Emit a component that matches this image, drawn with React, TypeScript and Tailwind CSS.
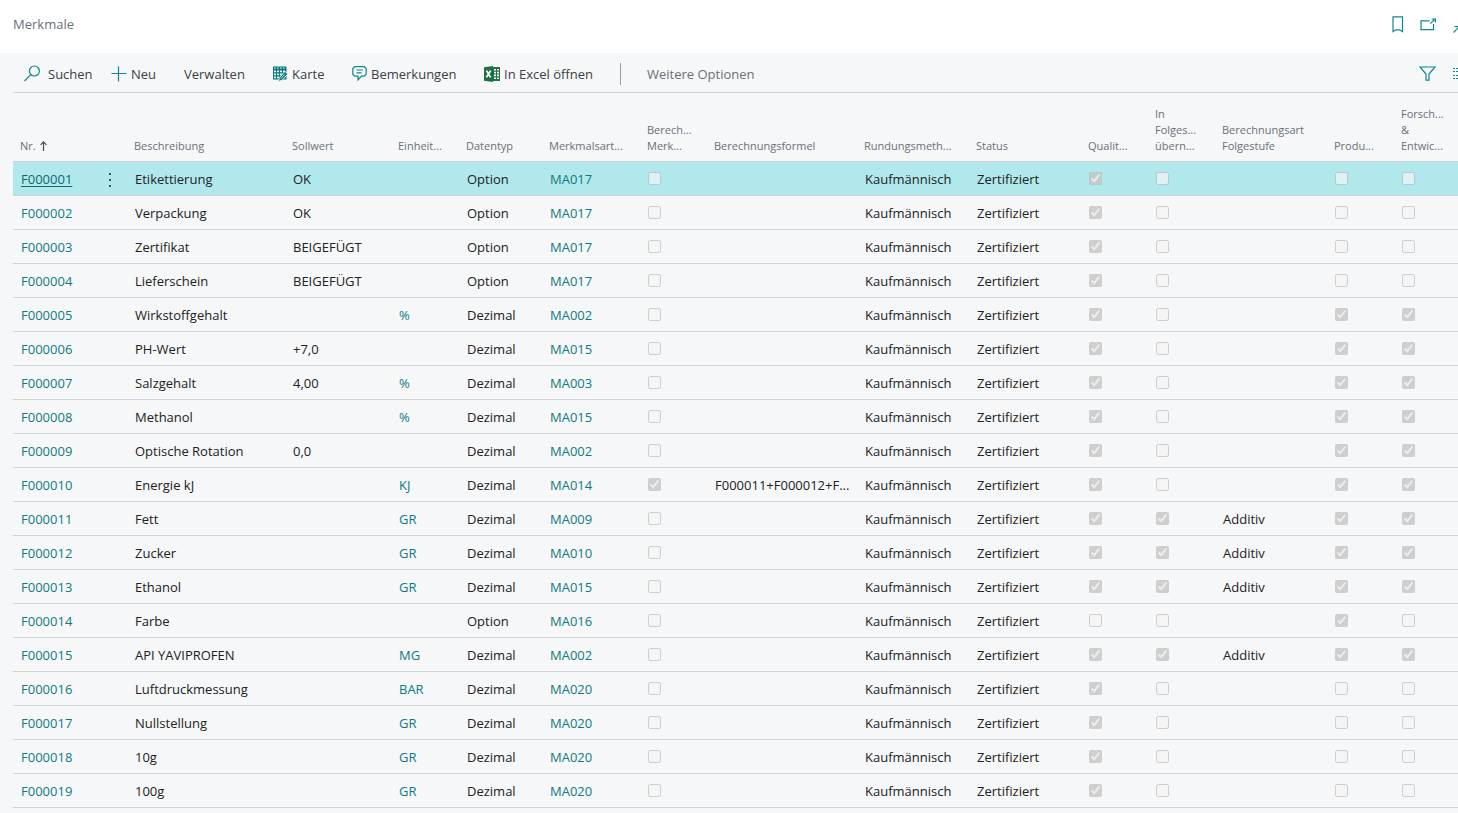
import React from "react";

type Row = {
  nr: string;
  name: string;
  target?: string;
  unit?: string;
  type: string;
  kind: string;
  calculated?: boolean;
  formula?: string;
  quality: boolean;
  carry?: boolean;
  nextLevel?: string;
  production?: boolean;
  research?: boolean;
};

const rows: Row[] = [
  { nr: "F000001", name: "Etikettierung", target: "OK", type: "Option", kind: "MA017", quality: true },
  { nr: "F000002", name: "Verpackung", target: "OK", type: "Option", kind: "MA017", quality: true },
  { nr: "F000003", name: "Zertifikat", target: "BEIGEFÜGT", type: "Option", kind: "MA017", quality: true },
  { nr: "F000004", name: "Lieferschein", target: "BEIGEFÜGT", type: "Option", kind: "MA017", quality: true },
  { nr: "F000005", name: "Wirkstoffgehalt", unit: "%", type: "Dezimal", kind: "MA002", quality: true, production: true, research: true },
  { nr: "F000006", name: "PH-Wert", target: "+7,0", type: "Dezimal", kind: "MA015", quality: true, production: true, research: true },
  { nr: "F000007", name: "Salzgehalt", target: "4,00", unit: "%", type: "Dezimal", kind: "MA003", quality: true, production: true, research: true },
  { nr: "F000008", name: "Methanol", unit: "%", type: "Dezimal", kind: "MA015", quality: true, production: true, research: true },
  { nr: "F000009", name: "Optische Rotation", target: "0,0", type: "Dezimal", kind: "MA002", quality: true, production: true, research: true },
  { nr: "F000010", name: "Energie kJ", unit: "KJ", type: "Dezimal", kind: "MA014", calculated: true, formula: "F000011+F000012+F...", quality: true, production: true, research: true },
  { nr: "F000011", name: "Fett", unit: "GR", type: "Dezimal", kind: "MA009", quality: true, carry: true, nextLevel: "Additiv", production: true, research: true },
  { nr: "F000012", name: "Zucker", unit: "GR", type: "Dezimal", kind: "MA010", quality: true, carry: true, nextLevel: "Additiv", production: true, research: true },
  { nr: "F000013", name: "Ethanol", unit: "GR", type: "Dezimal", kind: "MA015", quality: true, carry: true, nextLevel: "Additiv", production: true, research: true },
  { nr: "F000014", name: "Farbe", type: "Option", kind: "MA016", quality: false, production: true },
  { nr: "F000015", name: "API YAVIPROFEN", unit: "MG", type: "Dezimal", kind: "MA002", quality: true, carry: true, nextLevel: "Additiv", production: true, research: true },
  { nr: "F000016", name: "Luftdruckmessung", unit: "BAR", type: "Dezimal", kind: "MA020", quality: true },
  { nr: "F000017", name: "Nullstellung", unit: "GR", type: "Dezimal", kind: "MA020", quality: true },
  { nr: "F000018", name: "10g", unit: "GR", type: "Dezimal", kind: "MA020", quality: true },
  { nr: "F000019", name: "100g", unit: "GR", type: "Dezimal", kind: "MA020", quality: true },
];

const columns: { id: string; lines: string[]; width: string }[] = [
  { id: "nr", lines: ["Nr."], width: "w-[114px]" },
  { id: "name", lines: ["Beschreibung"], width: "w-[158px]" },
  { id: "target", lines: ["Sollwert"], width: "w-[106px]" },
  { id: "unit", lines: ["Einheit..."], width: "w-[68px]" },
  { id: "type", lines: ["Datentyp"], width: "w-[83px]" },
  { id: "kind", lines: ["Merkmalsart..."], width: "w-[98px]" },
  { id: "calculated", lines: ["Berech...", "Merk..."], width: "w-[67px]" },
  { id: "formula", lines: ["Berechnungsformel"], width: "w-[150px]" },
  { id: "rounding", lines: ["Rundungsmeth..."], width: "w-[112px]" },
  { id: "status", lines: ["Status"], width: "w-[112px]" },
  { id: "quality", lines: ["Qualit..."], width: "w-[67px]" },
  { id: "carry", lines: ["In", "Folges...", "übern..."], width: "w-[67px]" },
  { id: "nextLevel", lines: ["Berechnungsart", "Folgestufe"], width: "w-[112px]" },
  { id: "production", lines: ["Produ..."], width: "w-[67px]" },
  { id: "research", lines: ["Forsch...", "&", "Entwic..."], width: "w-auto" },
];

const teal = "#12868a";

function SearchIcon() {
  return (
    <svg width="17" height="17" viewBox="0 0 17 17" fill="none" stroke={teal} strokeWidth="1.2" aria-hidden="true">
      <circle cx="10.4" cy="6" r="5" />
      <path d="M6.8 9.6 0.5 16" />
    </svg>
  );
}

function PlusIcon() {
  return (
    <svg width="16" height="16" viewBox="0 0 16 16" stroke={teal} strokeWidth="1.2" aria-hidden="true">
      <path d="M7.5 0.5v15M0.5 7.5h15" />
    </svg>
  );
}

function CardIcon() {
  return (
    <svg width="16" height="16" viewBox="0 0 16 16" aria-hidden="true">
      <path d="M1 0.5h13.5v13H1z" fill="#08787c" />
      <path
        d="M2.2 1.5h1.3v1.2H2.2zM5.2 1.5h1.3v1.2H5.2zM8.2 1.5h1.3v1.2H8.2zM11.2 1.5h1.3v1.2h-1.3zM2 4.5h2v1.8H2zM5 4.5h2v1.8H5zM8 4.5h2v1.8H8zM11 4.5h2v1.8h-2zM2 7.5h2v1.8H2zM5 7.5h2v1.8H5zM8 7.5h2v1.8H8zM2 10.5h2v1.8H2zM5 10.5h2v1.8H5z"
        fill="#f5f7f9"
      />
      <path d="M6.3 15.5 7.4 11.5 13 5.4l2.8 2.6-5.6 6.2z" fill="#08787c" stroke="#f5f7f9" strokeWidth="0.9" />
      <path d="M8.8 12.6 12.6 8.4" stroke="#f5f7f9" strokeWidth="0.8" />
    </svg>
  );
}

function CommentIcon() {
  return (
    <svg width="15" height="15" viewBox="0 0 15 15" fill="none" stroke={teal} strokeWidth="1.2" aria-hidden="true">
      <path d="M2.8 0.6h9.4l2 2v5.6l-2 2H9.4L6 13.9V10.2H2.8l-2-2V2.6z" />
      <path d="M4.5 4h6.5M4.5 6.8h5" />
    </svg>
  );
}

function ExcelIcon() {
  return (
    <svg width="16" height="16" viewBox="0 0 16 16" aria-hidden="true">
      <path d="M8 1h8v14H8z" fill="#1f7145" />
      <path
        d="M10 3h2v1.6h-2zM13 3h2v1.6h-2zM10 5.8h2v1.6h-2zM13 5.8h2v1.6h-2zM10 8.6h2v1.6h-2zM13 8.6h2v1.6h-2zM10 11.4h2V13h-2zM13 11.4h2V13h-2z"
        fill="#fff"
      />
      <path d="M0 1.3 9 0v16l-9-1.3z" fill="#1f7145" />
      <path d="M2.4 4.6 6.6 11.4M6.6 4.6 2.4 11.4" stroke="#fff" strokeWidth="1.8" />
    </svg>
  );
}

function BookmarkIcon() {
  return (
    <svg width="12" height="17" viewBox="0 0 12 17" fill="none" stroke={teal} strokeWidth="1.2" aria-hidden="true">
      <path d="M1 0.8h9.5v14.8L7.6 13.8H3.9L1 15.6z" />
    </svg>
  );
}

function PopOutIcon() {
  return (
    <svg width="17" height="13" viewBox="0 0 17 13" fill="none" stroke={teal} strokeWidth="1.2" aria-hidden="true">
      <path d="M9.5 2.8H1v8.8h12.5V6" />
      <path d="M10.4 5.6 15 1M11.8 1H15.4V4.6" />
    </svg>
  );
}

function CollapseIcon() {
  return (
    <svg width="16" height="16" viewBox="0 0 16 16" fill="none" stroke={teal} strokeWidth="1.2" aria-hidden="true">
      <path d="M0.5 15.5 6 10M1.5 9.6H6.4V14.5M15.5 0.5 10 6M9.6 1.5V6.4H14.5" />
    </svg>
  );
}

function FilterIcon() {
  return (
    <svg width="17" height="15" viewBox="0 0 17 15" fill="none" stroke={teal} strokeWidth="1.2" aria-hidden="true">
      <path d="M1 1h15L10 8v6.2H7V8z" />
    </svg>
  );
}

function ListIcon() {
  return (
    <svg width="16" height="13" viewBox="0 0 16 13" stroke={teal} strokeWidth="1.2" aria-hidden="true">
      <path d="M0 1.5h2M3 1.5h13M0 4.5h2M3 4.5h13M0 8.5h2M3 8.5h13M0 11.5h2M3 11.5h13" />
    </svg>
  );
}

function TickCell({ on, label }: { on?: boolean; label: string }) {
  return (
    <td className="p-0 pl-2">
      <input type="checkbox" disabled checked={!!on} readOnly aria-label={label} className="m-0 block size-[13px]" />
    </td>
  );
}

function Cell({ children }: { children?: React.ReactNode }) {
  return <td className="p-0 pt-[3px] pl-2 whitespace-nowrap">{children}</td>;
}

function CodeLink({ children }: { children: React.ReactNode }) {
  return (
    <a href="#" className="text-[#12797d]">
      {children}
    </a>
  );
}

function Action({ label, icon, className }: { label: string; icon?: React.ReactNode; className: string }) {
  return (
    <button type="button" className={`flex items-center whitespace-nowrap ${className}`}>
      {icon}
      <span className="pt-0.5">{label}</span>
    </button>
  );
}

export default function App() {
  return (
    <div
      lang="de"
      className="flex min-h-screen flex-col overflow-hidden bg-[#f5f7f9] font-['Open_Sans',sans-serif] text-[13px] text-[#212121]"
    >
      <header className="flex h-[53px] items-center justify-between bg-white pb-1 pl-[13px]">
        <h1 className="text-[13px] text-[#6b7078]">Merkmale</h1>
        <div className="-mr-[11px] flex items-center gap-4">
          <button type="button" aria-label="Lesezeichen"><BookmarkIcon /></button>
          <button type="button" aria-label="In neuem Fenster öffnen"><PopOutIcon /></button>
          <button type="button" aria-label="Verkleinern"><CollapseIcon /></button>
        </div>
      </header>

      <main className="flex flex-col pl-[13px]">
        <div
          role="toolbar"
          aria-label="Aktionen"
          className="flex h-10 items-center justify-between border-b border-[#cdd1d4] pt-0.5 pl-[11px]"
        >
          <div className="flex items-center text-[#3b3f44]">
            <Action label="Suchen" icon={<SearchIcon />} className="w-[87px] gap-[7px]" />
            <Action label="Neu" icon={<PlusIcon />} className="w-[73px] gap-1" />
            <Action label="Verwalten" className="w-[88px]" />
            <Action label="Karte" icon={<CardIcon />} className="w-20 gap-1" />
            <Action label="Bemerkungen" icon={<CommentIcon />} className="w-[132px] gap-1" />
            <Action label="In Excel öffnen" icon={<ExcelIcon />} className="w-[136px] gap-1" />
            <Action label="Weitere Optionen" className="h-[22px] border-l border-[#9a9ea3] pl-[26px] text-[#6b7078]" />
          </div>
          <div className="-mr-[11px] flex items-center gap-[17px]">
            <button type="button" aria-label="Filter"><FilterIcon /></button>
            <button type="button" aria-label="Listenansicht"><ListIcon /></button>
          </div>
        </div>

        <table className="w-full table-fixed border-collapse text-left">
          <thead>
            <tr className="h-[68px] border-b border-[#d0d4d6] align-bottom text-[11px] leading-4 text-[#6b7078]">
              {columns.map((c) => (
                <th key={c.id} scope="col" className={`${c.width} p-0 pb-[7px] pl-[7px] font-normal whitespace-nowrap`}>
                  {c.lines.map((line) => (
                    <div key={line} className="flex items-center gap-1">
                      {line}
                      {c.id === "nr" && (
                        <svg width="7" height="10" viewBox="0 0 7 10" fill="none" stroke="#4a4e54" strokeWidth="1.2" aria-hidden="true">
                          <path d="M3.5 10V1M0.6 3.8 3.5 0.9 6.4 3.8" />
                        </svg>
                      )}
                    </div>
                  ))}
                </th>
              ))}
            </tr>
          </thead>
          <tbody>
            {rows.map((r, i) => (
              <tr key={r.nr} className={i === 0 ? "h-[34px] border-b border-[#d0d4d6] bg-[#b1e8ec]" : "h-[34px] border-b border-[#d0d4d6]"}>
                <Cell>
                  <div className="flex items-center justify-between pr-[15px]">
                    <a href="#" className={i === 0 ? "text-[#0b6a6e] underline underline-offset-2" : "text-[#12797d]"}>
                      {r.nr}
                    </a>
                    {i === 0 && (
                      <button type="button" aria-label="Weitere Optionen anzeigen">
                        <svg width="4" height="14" viewBox="0 0 4 14" fill="#33595c" aria-hidden="true">
                          <path d="M1 0h2v2H1zM1 6h2v2H1zM1 12h2v2H1z" />
                        </svg>
                      </button>
                    )}
                  </div>
                </Cell>
                <Cell>{r.name}</Cell>
                <Cell>{r.target}</Cell>
                <Cell>{r.unit && <CodeLink>{r.unit}</CodeLink>}</Cell>
                <Cell>{r.type}</Cell>
                <Cell><CodeLink>{r.kind}</CodeLink></Cell>
                <TickCell on={r.calculated} label="Berechnetes Merkmal" />
                <Cell>{r.formula}</Cell>
                <Cell>Kaufmännisch</Cell>
                <Cell>Zertifiziert</Cell>
                <TickCell on={r.quality} label="Qualität" />
                <TickCell on={r.carry} label="In Folgestufe übernehmen" />
                <Cell>{r.nextLevel}</Cell>
                <TickCell on={r.production} label="Produktion" />
                <TickCell on={r.research} label="Forschung & Entwicklung" />
              </tr>
            ))}
          </tbody>
        </table>
      </main>
    </div>
  );
}
